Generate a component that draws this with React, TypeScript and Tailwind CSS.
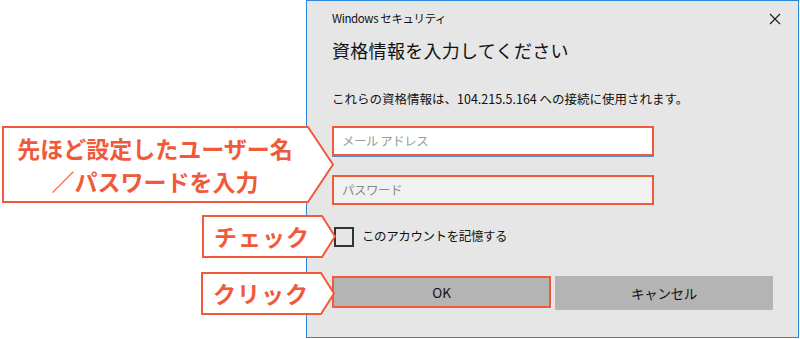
import React from 'react'

const ORANGE = '#f05a3a'

/**
 * Callout annotation: white arrow-shaped box with orange outline
 */
function Callout({
  left,
  top,
  width,
  height,
  tip,
  children,
}: {
  left: number
  top: number
  width: number
  height: number
  tip: number
  children: React.ReactNode
}) {
  const w = width + tip
  return (
    <div className="absolute" style={{ left, top, width: w, height }}>
      <svg className="absolute inset-0" width={w} height={height}>
        <polygon
          points={`1,1 ${width},1 ${w - 1},${height / 2} ${width},${height - 1} 1,${height - 1}`}
          fill="#ffffff"
          stroke={ORANGE}
          strokeWidth={2}
          strokeLinejoin="miter"
        />
      </svg>
      <div
        className="relative flex h-full flex-col items-center justify-center text-[23px] font-bold leading-[33px] text-[#f05a3a]"
        style={{ width }}
      >
        {children}
      </div>
    </div>
  )
}

export default function App() {
  return (
    <div
      className="relative h-[339px] w-[800px] overflow-hidden bg-white"
      style={{ fontFamily: '"Noto Sans CJK JP", "Noto Sans", sans-serif' }}
    >
      {/* ダイアログ本体 */}
      <div className="ml-[306px] flex h-[338px] w-[493px] flex-col border border-[#2a86d8] bg-[#e6e6e6] pl-[25px] text-[#111111]">
        <div className="flex h-[35px] items-center justify-between pr-[17px]">
          <span className="text-[11.5px] tracking-[-0.4px]">Windows セキュリティ</span>
          <svg width="12" height="12" viewBox="0 0 12 12">
            <path d="M1 1 L11 11 M11 1 L1 11" stroke="#1a1a1a" strokeWidth="1.1" />
          </svg>
        </div>

        <div className="flex h-[28px] items-center text-[18px] tracking-[0.3px]">
          資格情報を入力してください
        </div>

        <div className="mt-[24px] flex h-[22px] items-center text-[12.5px]">
          これらの資格情報は、104.215.5.164 への接続に使用されます。
        </div>

        {/* メールアドレス */}
        <div className="mt-[16px] w-[322px] border-b border-[#5c8fc9]">
          <div className="flex h-[30px] items-center border-2 border-[#f05a3a] bg-white pl-[8px] text-[12.5px] tracking-[-0.5px] text-[#9a9a9a]">
            メール アドレス
          </div>
        </div>

        {/* パスワード */}
        <div className="mt-[18px] w-[322px]">
          <div className="flex h-[30px] items-center border-2 border-[#f05a3a] bg-[#f1f1f1] pl-[8px] text-[12.5px] tracking-[-0.5px] text-[#8a8a8a]">
            パスワード
          </div>
        </div>

        <div className="mt-[21px] flex h-[21px] items-center gap-[8px] pl-[2px]">
          <div className="h-[20px] w-[20px] border-2 border-[#333333]" />
          <span className="text-[12.5px] tracking-[-0.4px]">このアカウントを記憶する</span>
        </div>

        <div className="mt-[29px] flex gap-[4px]">
          <div className="flex h-[32px] w-[219px] items-center justify-center border-2 border-[#f05a3a] bg-[#b4b4b4] text-[13.5px]">
            OK
          </div>
          <div className="flex h-[34px] w-[218px] items-center justify-center bg-[#b4b4b4] text-[13.5px] tracking-[-0.3px]">
            キャンセル
          </div>
        </div>
      </div>

      {/* 注釈 */}
      <Callout left={2} top={126} width={306} height={77} tip={26}>
        <span>先ほど設定したユーザー名</span>
        <span>／パスワードを入力</span>
      </Callout>
      <Callout left={202} top={215} width={120} height={43} tip={14}>
        <span className="tracking-[1px]">チェック</span>
      </Callout>
      <Callout left={201} top={272} width={120} height={43} tip={14}>
        <span className="tracking-[1px]">クリック</span>
      </Callout>
    </div>
  )
}
